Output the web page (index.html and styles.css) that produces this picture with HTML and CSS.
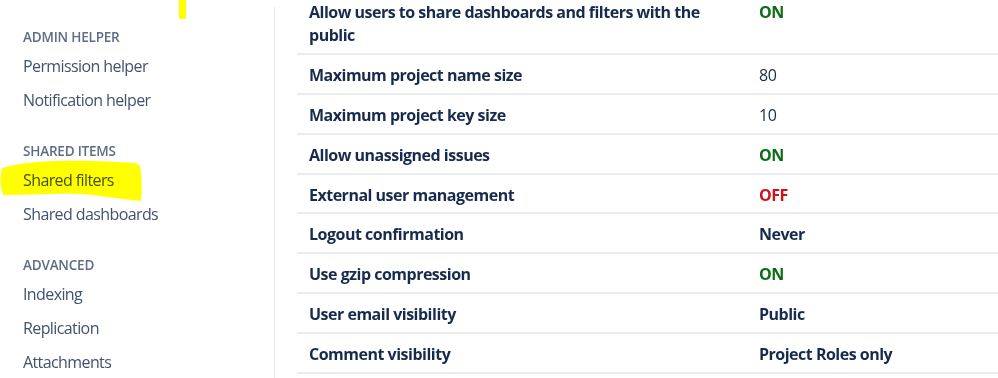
FILE: index.html
```html
<!DOCTYPE html>
<html lang="en">
<head>
<meta charset="utf-8">
<title>General configuration</title>
<link rel="stylesheet" href="styles.css">
</head>
<body>
<div class="page">
  <span class="marker-bar"></span>
  <aside class="sidebar">
    <section class="nav-group">
      <h3 class="nav-heading">ADMIN HELPER</h3>
      <a class="nav-item">Permission helper</a>
      <a class="nav-item">Notification helper</a>
    </section>
    <section class="nav-group">
      <h3 class="nav-heading">SHARED ITEMS</h3>
      <a class="nav-item highlighted">Shared filters
        <svg class="highlight" viewBox="0 0 145 45" width="145" height="45" aria-hidden="true">
          <path d="M2,9 C20,4 40,2 60,2 C90,1 115,3 136,4 L140,7 C142,20 142,33 141,42 C120,40 100,36 80,35 C55,34 30,36 3,36 C0,27 0,17 2,9 Z" fill="#ffff00"/>
        </svg>
      </a>
      <a class="nav-item">Shared dashboards</a>
    </section>
    <section class="nav-group">
      <h3 class="nav-heading">ADVANCED</h3>
      <a class="nav-item">Indexing</a>
      <a class="nav-item">Replication</a>
      <a class="nav-item">Attachments</a>
    </section>
  </aside>
  <main class="content">
    <table class="settings">
      <tbody>
        <tr><th>Allow users to share dashboards and filters with the public</th><td class="on">ON</td></tr>
        <tr><th>Maximum project name size</th><td class="plain">80</td></tr>
        <tr><th>Maximum project key size</th><td class="plain">10</td></tr>
        <tr><th>Allow unassigned issues</th><td class="on">ON</td></tr>
        <tr><th>External user management</th><td class="off">OFF</td></tr>
        <tr><th>Logout confirmation</th><td>Never</td></tr>
        <tr><th>Use gzip compression</th><td class="on">ON</td></tr>
        <tr><th>User email visibility</th><td>Public</td></tr>
        <tr><th>Comment visibility</th><td>Project Roles only</td></tr>
      </tbody>
    </table>
  </main>
</div>
</body>
</html>
```
FILE: styles.css
```css
html, body {
  margin: 0;
  padding: 0;
  background: #ffffff;
}

body {
  font-family: "Open Sans", "Noto Sans", "Liberation Sans", sans-serif;
  color: #172b4d;
  overflow: hidden;
}

.page {
  position: relative;
  display: flex;
  align-items: flex-start;
  width: 998px;
  height: 378px;
  overflow: hidden;
}

.marker-bar {
  position: absolute;
  left: 179px;
  top: 0;
  width: 7px;
  height: 19px;
  background: #ffff00;
}

.sidebar {
  flex: 0 0 275px;
  margin-top: 7px;
  padding: 20px 0 0 23px;
  box-sizing: border-box;
  border-right: 1px solid #e4e6ea;
  height: 371px;
}

.nav-group + .nav-group {
  margin-top: 24px;
}

.nav-heading {
  margin: 0 0 2px;
  font-size: 13.5px;
  line-height: 20px;
  font-weight: 600;
  color: #5e6c84;
  letter-spacing: -0.2px;
}

.nav-item {
  display: block;
  position: relative;
  font-size: 16px;
  line-height: 34px;
  color: #42526e;
  letter-spacing: -0.6px;
}

.highlight {
  position: absolute;
  left: -23px;
  top: -4px;
  mix-blend-mode: multiply;
  pointer-events: none;
}

.content {
  flex: 1;
  margin-left: 22px;
  margin-top: -8px;
}

.settings {
  width: 100%;
  border-collapse: collapse;
}

.settings th,
.settings td {
  padding: 9px 12px 5.9px;
  line-height: 23px;
  font-size: 16px;
  text-align: left;
  vertical-align: top;
  border-bottom: 2px solid #ebecf0;
  font-weight: 700;
  color: #172b4d;
  letter-spacing: -0.5px;
}

.settings th {
  width: 426px;
}

.settings td.plain {
  font-weight: 400;
}

.settings td.on {
  color: #0b6e14;
}

.settings td.off {
  color: #d0101b;
}
```
